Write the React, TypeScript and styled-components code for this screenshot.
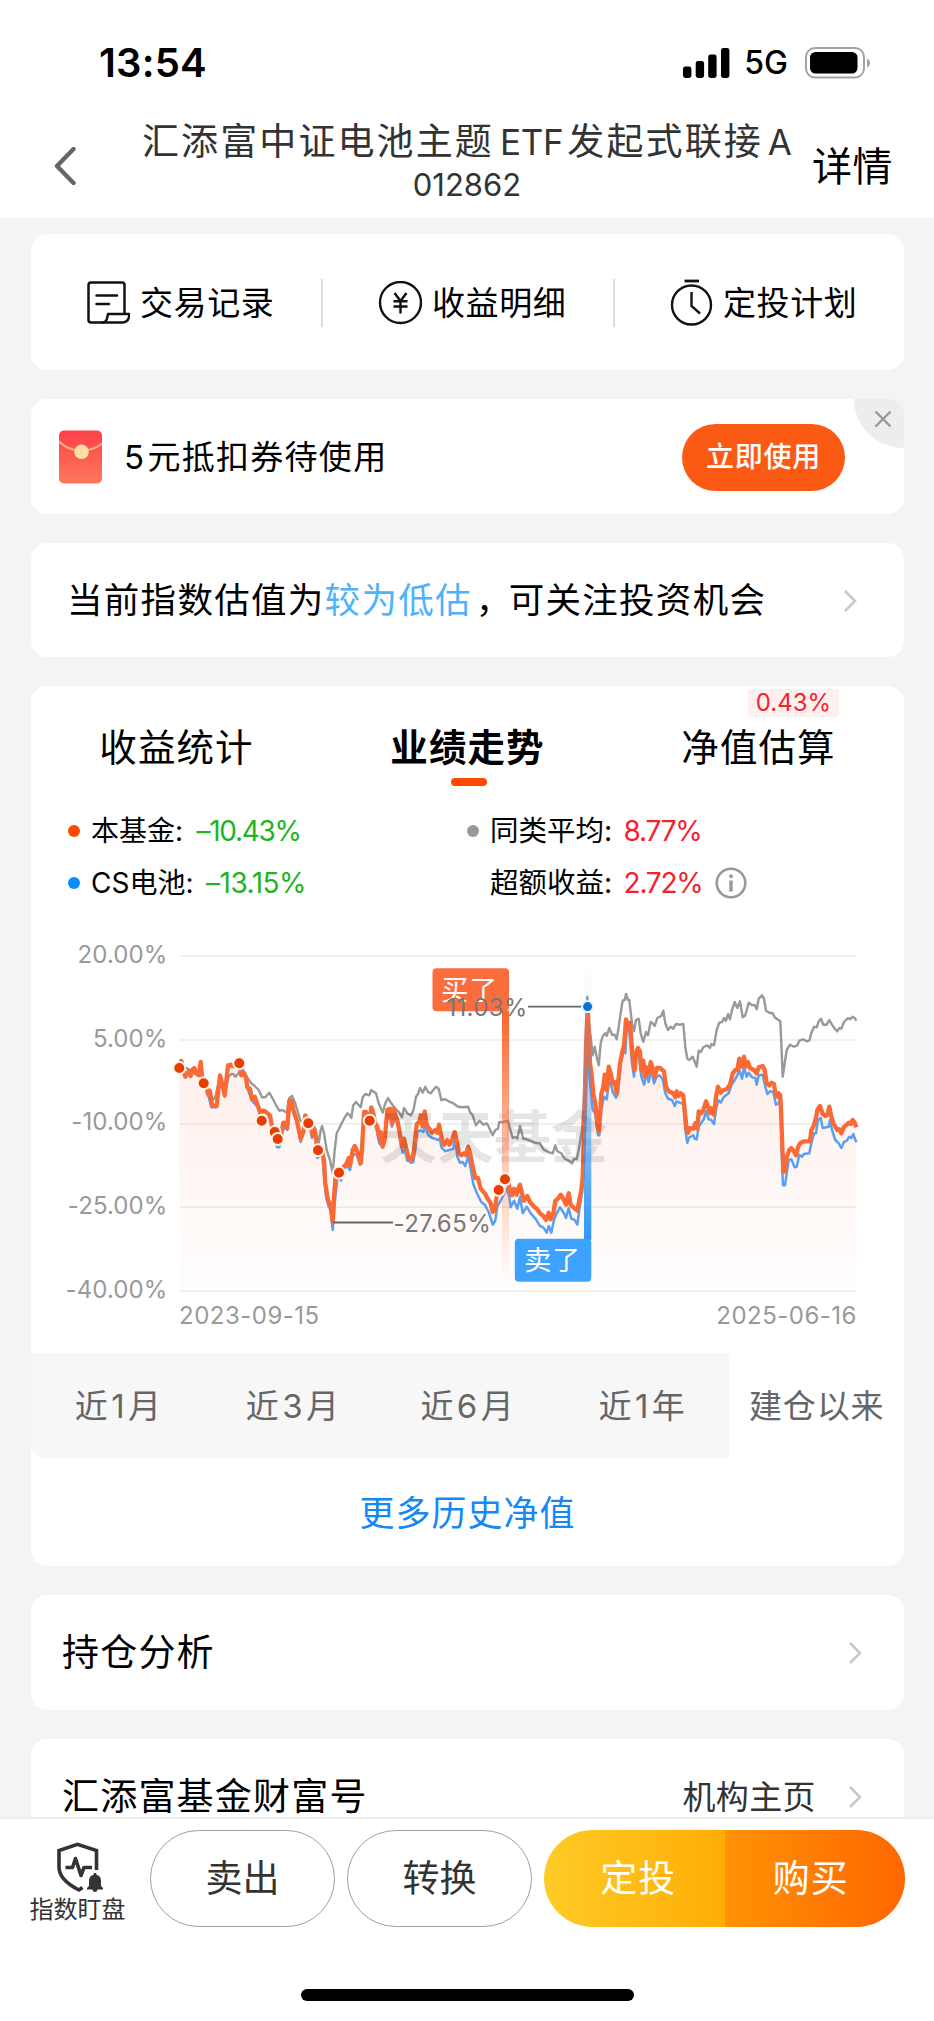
import React from "react";
import styled, { createGlobalStyle, css } from "styled-components";

const GlobalStyle = createGlobalStyle`
  *, *::before, *::after { box-sizing: border-box; }
  body {
    margin: 0;
    background: #f4f4f4;
    font-family: Inter, "Noto Sans CJK SC", sans-serif;
    color: #000;
  }
`;

const Screen = styled.div`
  width: 934px;
  height: 2021px;
  display: flex;
  flex-direction: column;
  overflow: hidden;
  background: #f4f4f4;
`;

const Label = styled.span<{ $size: number; $gap?: number; $color?: string; $weight?: number; $line?: number }>`
  font-size: ${(p) => p.$size}px;
  letter-spacing: ${(p) => p.$gap ?? 0}px;
  color: ${(p) => p.$color ?? "#000"};
  font-weight: ${(p) => p.$weight ?? 400};
  line-height: ${(p) => p.$line ?? 44}px;
  white-space: nowrap;
`;

/* Latin letters, digits and marks set inside Chinese text, with air on both sides. */
const Latin = styled.span<{ $before?: number; $after?: number }>`
  margin-left: ${(p) => p.$before ?? 0}px;
  margin-right: ${(p) => p.$after ?? 0}px;
`;

/* ---------- header ---------- */

const Header = styled.header`
  height: 218px;
  flex: none;
  background: #fff;
`;

const StatusBar = styled.div`
  height: 116px;
  padding: 10px 63px 0 99px;
  display: flex;
  align-items: center;
  justify-content: space-between;
`;

const StatusIcons = styled.div`
  display: flex;
  align-items: center;
  svg { display: block; }
`;

const NetworkLabel = styled(Label)`
  margin: 0 17px 0 13px;
`;

const NavBar = styled.div`
  display: grid;
  grid-template-columns: 140px 654px 140px;
  height: 102px;
`;

const NavBack = styled.div`
  padding: 31px 0 0 53px;
`;

const NavTitle = styled.div`
  display: flex;
  flex-direction: column;
  align-items: center;
  padding-top: 2px;
`;

const NavAction = styled.div`
  padding: 29px 0 0 18px;
`;

/* ---------- cards ---------- */

const Content = styled.main`
  flex: 1;
  min-height: 0;
  overflow: hidden;
  display: flex;
  flex-direction: column;
  gap: 29px;
  padding: 16px 30px 0 31px;
`;

const Card = styled.section<{ $height: number }>`
  position: relative;
  flex: none;
  height: ${(p) => p.$height}px;
  background: #fff;
  border-radius: 16px;
  overflow: hidden;
`;

const QuickActions = styled.div`
  display: grid;
  grid-template-columns: 290px 292px 1fr;
  align-items: center;
  height: 138px;
`;

const QuickAction = styled.div`
  height: 48px;
  display: flex;
  align-items: center;
  padding-left: 55px;
  & + & { border-left: 2px solid #dedede; }
  svg { flex: none; margin-right: 10px; }
`;

const Row = styled.div<{ $left: number; $right: number }>`
  height: 100%;
  display: flex;
  align-items: center;
  justify-content: space-between;
  padding: 1px ${(p) => p.$right}px 0 ${(p) => p.$left}px;
`;

const RowGroup = styled.div<{ $gap: number }>`
  display: flex;
  align-items: center;
  gap: ${(p) => p.$gap}px;
`;

const UseButton = styled.button`
  width: 163px;
  height: 67px;
  border: 0;
  border-radius: 34px;
  background: #fb5a14;
  padding: 0;
  display: flex;
  align-items: center;
  justify-content: center;
  font-family: inherit;
`;

const CloseCorner = styled.div`
  position: absolute;
  top: 0;
  right: 0;
  width: 50px;
  height: 49px;
  background: #ededed;
  border-bottom-left-radius: 50px 49px;
  svg { display: block; margin: 11px 0 0 20px; }
`;

/* ---------- performance ---------- */

const Tabs = styled.div`
  display: grid;
  grid-template-columns: repeat(3, 1fr);
  height: 119px;
`;

const Tab = styled.div`
  position: relative;
  display: flex;
  flex-direction: column;
  align-items: center;
  padding-top: 40px;
`;

const TabMark = styled.div`
  width: 36px;
  height: 8px;
  border-radius: 4px;
  background: #ff4800;
  margin: 8px 0 0 3px;
`;

const TabBadge = styled.div`
  position: absolute;
  top: 3px;
  left: 135px;
  width: 91px;
  height: 28px;
  border-radius: 4px;
  background: #fff0f0;
  display: flex;
  align-items: center;
  justify-content: center;
`;

const Legend = styled.div`
  display: grid;
  grid-template-columns: 399px 1fr;
  grid-auto-rows: 52px;
  padding-left: 37px;
  margin-bottom: 1px;
`;

const LegendItem = styled.div`
  display: flex;
  align-items: center;
  svg { margin-left: 12px; }
`;

const Dot = styled.i<{ $color: string }>`
  width: 12px;
  height: 12px;
  border-radius: 50%;
  background: ${(p) => p.$color};
  margin-right: 11px;
`;

const LegendName = styled(Label)<{ $width: number }>`
  width: ${(p) => p.$width}px;
`;

const ChartSvg = styled.svg`
  display: block;
  width: 873px;
  height: 430px;
  margin-bottom: 13px;
`;

const Ranges = styled.div`
  display: grid;
  grid-template-columns: repeat(5, 1fr);
  height: 105px;
  background: #f7f7f7;
  border-bottom-left-radius: 12px;
`;

const Range = styled.div<{ $active?: boolean }>`
  display: flex;
  align-items: center;
  justify-content: center;
  ${(p) => p.$active && css`background: #fff;`}
`;

const MoreLink = styled.div`
  height: 110px;
  display: flex;
  align-items: center;
  justify-content: center;
`;

/* ---------- bottom bar ---------- */

const BottomBar = styled.footer`
  flex: none;
  height: 204px;
  background: #fff;
  border-top: 2px solid #ededed;
  display: flex;
  flex-direction: column;
  justify-content: space-between;
  align-items: center;
  padding-bottom: 20px;
`;

const Actions = styled.div`
  width: 100%;
  display: flex;
  padding: 11px 29px 0 29px;
`;

const Watch = styled.div`
  width: 97px;
  display: flex;
  flex-direction: column;
  align-items: center;
  padding-top: 12px;
  margin-right: 24px;
  svg { display: block; margin-left: 4px; }
`;

const Pill = styled.button`
  width: 185px;
  height: 97px;
  border: 1.5px solid #a0a0a0;
  border-radius: 49px;
  background: #fff;
  margin-right: 12px;
  padding: 0;
  font-family: inherit;
`;

const BuyGroup = styled.div`
  display: flex;
  width: 361px;
  height: 97px;
  border-radius: 49px;
  overflow: hidden;
`;

const BuyHalf = styled.button<{ $from: string; $to: string; $side: "left" | "right" }>`
  flex: 1;
  border: 0;
  padding: 0;
  padding-${(p) => p.$side}: 8px;
  font-family: inherit;
  background: linear-gradient(90deg, ${(p) => p.$from}, ${(p) => p.$to});
`;

const HomeIndicator = styled.div`
  width: 333px;
  height: 12px;
  border-radius: 6px;
  background: #000;
`;

/* ---------- icons ---------- */

const Chevron = () => (
  <svg width="14" height="24" viewBox="0 0 14 24" fill="none" stroke="#c8c8c8" strokeWidth="2.6">
    <path d="M2 2 12 12 2 22" />
  </svg>
);

const SignalIcon = () => (
  <svg width="48" height="30" viewBox="0 0 48 30">
    <rect x="0" y="18.5" width="8.4" height="11.5" rx="2.4" />
    <rect x="12.7" y="13" width="8.4" height="17" rx="2.4" />
    <rect x="25.2" y="6.5" width="8.4" height="23.5" rx="2.4" />
    <rect x="38" y="0" width="8.4" height="30" rx="2.4" />
  </svg>
);

const BatteryIcon = () => (
  <svg width="66" height="32" viewBox="0 0 66 32">
    <rect x="1" y="1" width="58" height="29.5" rx="9" fill="none" stroke="#a3a3a3" strokeWidth="2" />
    <rect x="5" y="5" width="47.5" height="21.5" rx="5.5" />
    <path d="M62 11.5c4 1.5 4 7.500 0 9z" fill="#a3a3a3" />
  </svg>
);

const RecordIcon = () => (
  <svg width="44" height="44" viewBox="0 0 44 44" fill="none" stroke="#111" strokeWidth="2.5" strokeLinejoin="round">
    <path d="M18 41.500H5q-2.500 0-2.500-2.500V4q0-2.500 2.500-2.500h31q2.500 0 2.500 2.500v29" />
    <path d="M10.500 14.500h20.500M10.500 23h12.500" strokeLinecap="round" />
    <path d="M22 33h21.500q-.5 8.500-7 8.500H16.500q3.500 0 4.500-4z" />
  </svg>
);

const YenIcon = () => (
  <svg width="44" height="44" viewBox="0 0 44 44" fill="none" stroke="#111" strokeWidth="2.4">
    <circle cx="22.500" cy="21.500" r="20.500" />
    <path d="M16.500 12 22.500 20 28.500 12M22.500 20v12.500M15.500 20.300h14M15.500 25.500h14" />
  </svg>
);

const TimerIcon = () => (
  <svg width="43" height="48" viewBox="0 0 43 48" fill="none" stroke="#111" strokeWidth="2.4">
    <circle cx="21.500" cy="26" r="19.500" />
    <path d="M14.500 2h14.500" strokeWidth="2.800" />
    <path d="M21.500 13v14l8.500 7.500" />
  </svg>
);

const EnvelopeIcon = () => (
  <svg width="43" height="54" viewBox="0 0 43 54">
    <defs>
      <linearGradient id="env" x1="0" y1="0" x2="0" y2="1">
        <stop offset="0" stopColor="#fd4047" />
        <stop offset="1" stopColor="#ff785c" />
      </linearGradient>
    </defs>
    <rect y="0.500" width="43" height="53" rx="5" fill="url(#env)" />
    <path d="M0 11.500Q9 20.500 22 20.500T43 13.500" fill="none" stroke="#ffb07f" strokeWidth="2" />
    <circle cx="22.500" cy="21.800" r="7.300" fill="#fddfa4" />
  </svg>
);

const InfoIcon = () => (
  <svg width="32" height="32" viewBox="0 0 32 32" fill="none" stroke="#999" strokeWidth="2.600">
    <circle cx="16" cy="16" r="14.300" />
    <path d="M16 13.500v11" strokeWidth="3.400" />
    <circle cx="16" cy="9.300" r="2" fill="#999" stroke="none" />
  </svg>
);

const ShieldIcon = () => (
  <svg width="50" height="52" viewBox="0 0 50 52" fill="none" stroke="#333" strokeWidth="3.600">
    <path d="M41.500 28V8.500L22.500 2.300 4 8.500V25q0 13 20 23l3.500-2.500" />
    <path d="M10.500 25.500H17.500L20.500 16.500 26 33.500 29 25.500H37" strokeLinejoin="round" />
    <path
      d="M32 47.500v-1.600l2-2V39q0-5.300 4.700-6.200V31h2.600v1.800Q46 33.700 46 39v4.900l2 2v1.600h-5.300q-.7 2.500-2.700 2.500t-2.700-2.500z"
      fill="#333"
      stroke="none"
    />
  </svg>
);

/* ---------- chart ---------- */

type Segment = [number, string];

// Every segment holds its own horizontal offset; three units make one pixel.
const fund: Segment[] = [
  [0, "418,414 424,392 430,414 436,440 442,432 448,422 452,438 458,418 463,414 470,432 476,436 482,396 486,440 491,460 500,476 505,494 510,482 516,526 530,528 534,490 540,436 547,462 554,496 560,440 564,406 574,404 584,410 598,402 604,436 612,430 618,442 622,472 630,476 636,508 644,500 654,528 662,552 668,542 676,544 690,556 696,590 704,605 713,628 720,640 726,600 730,578 736,578 742,594 748,512 754,512 760,540 770,570 782,626 790,606 796,556 805,580 812,584 818,616 824,600 830,640 836,662 846,662 852,690 856,760 864,810 872,828 878,876"],
  [870, "12,800 16,745 27,728 36,715 44,708 50,700 56,684 60,706 68,660 74,648 82,664 92,700 96,660 102,546 108,546 119,572 124,532 130,550 136,580 142,590 148,626 152,606 158,650 164,630 172,540 180,536 186,580 192,536 196,556 202,570 208,600 216,650 222,626 230,660 236,686 246,688 252,660 260,582 268,576 272,556 278,590 284,544 290,584 298,596 306,608 316,600 322,608 327,584 334,620 342,644 352,630 358,644 366,630 374,606 382,640 386,670 394,676 402,670 408,676 414,650 420,668 428,710 436,744 444,744 452,776 464,790 472,804 482,820 488,846 494,840 500,800 506,780 514,768 525,748 534,756 540,780 546,796 552,776 560,794 566,772 570,764 576,790 582,812 592,798 600,816 612,830 620,836 630,850 640,858 648,870 656,848 662,868 670,850 676,812 684,806 692,794 700,806 708,824 716,790 722,824 730,832 742,842 748,810 754,780 758,740 761,640 764,520 768,350 773,232 776,300 780,400 784,425 790,490 796,520 802,580 806,605 810,560 814,492 820,470 824,434 830,480 836,410 842,430 848,460 854,456 860,490 866,440 870,400 876,370 882,346 888,268"],
  [1680, "84,290 90,278 94,330 98,380 104,420 108,370 114,354 120,364 124,420 130,392 134,440 140,412 146,430 152,396 158,416 164,440 170,414 180,414 192,424 198,470 206,484 220,490 226,502 230,484 236,498 242,490 250,496 254,540 260,600 264,608 270,594 280,596 286,580 292,596 296,544 304,550 310,540 318,514 324,530 330,550 334,534 342,554 348,500 354,470 362,488 370,480 380,478 390,464 398,430 406,420 412,420 418,386 424,410 432,380 438,410 444,396 450,414 462,420 470,430 476,412 488,408 494,420 500,460 508,466 514,458 522,462 526,490 532,500 536,490 541,496 544,560 547,650 551,726 556,720 560,680 568,660 574,654 582,664 588,676 594,652 600,640 610,634 630,634 634,600 640,590 648,564 652,540 660,528 668,552 676,558 682,554 688,530 694,560 702,584 712,600 718,598 724,610 732,590 740,584 746,578 752,582 758,570 764,578 769,592"],
];

const index: Segment[] = [
  [0, "418,414 436,438 458,420 476,436 482,400 491,462 505,496 514,532 528,532 540,438 554,500 564,410 598,406 618,444 622,474 636,512 654,532 665,572 690,560 704,618 711,652 718,652 726,606 736,590 742,600 750,516 770,574 782,636 796,566 810,590 816,624 824,606 832,684 846,670 858,800 866,830 872,840 878,900 884,820 892,748"],
  [870, "27,740 33,752 38,728 44,714 52,708 60,720 68,672 80,674 90,704 98,600 108,560 119,576 130,570 140,600 148,640 158,652 172,560 180,560 186,590 194,560 204,590 210,630 218,668 224,660 232,692 240,694 242,698 250,696 256,660 262,606 272,600 280,606 286,590 294,614 306,624 316,626 322,630 330,626 334,652 346,664 358,660 370,656 374,616 382,680 390,698 398,696 406,708 414,680 420,704 430,762 440,788 454,816 464,824 476,846 488,884 496,872 502,830 512,812 520,796 530,776 538,800 542,832 552,812 562,836 570,800 578,850 590,830 602,850 618,868 630,888 640,892 650,908 656,888 664,908 672,870 680,850 690,832 702,850 708,864 716,834 724,866 734,870 742,884 748,840 756,790 762,700 768,520 773,232 778,440 788,540 796,550 804,616 808,616 814,540 822,500 830,508 836,460 842,460 848,486 858,503 864,490 872,400 880,366 886,370 890,300"],
  [1680, "88,300 96,400 102,440 108,380 116,370 124,440 132,464 140,430 146,456 154,420 162,460 170,440 178,436 188,448 196,490 204,506 216,510 224,528 230,514 244,520 250,520 256,600 262,638 268,622 280,616 284,626 290,628 296,590 304,578 312,566 318,544 326,568 334,570 342,582 348,540 354,510 362,518 372,500 386,490 394,466 404,450 412,436 418,420 426,446 432,412 440,440 446,428 456,442 466,444 470,464 476,436 488,434 496,470 502,492 510,484 520,486 528,524 536,520 541,500 546,700 549,766 555,766 560,730 566,690 574,688 584,712 590,710 598,674 606,680 612,672 628,670 634,640 642,610 648,610 654,570 662,564 668,594 686,590 690,570 696,600 706,630 716,640 724,654 732,636 740,632 748,620 754,624 760,612 766,630 770,636"],
];

const average: Segment[] = [
  [0, "418,414 440,414 458,430 480,430 491,460 505,486 516,514 526,500 540,440 554,490 566,440 574,432 580,432 586,440 598,428 610,420 620,440 634,460 644,468 656,480 666,502 676,502 688,488 696,502 708,526 718,542 728,540 740,548 748,504 756,498 766,520 774,548 782,574 790,578 798,560 806,580 814,600 824,590 836,640 842,600 846,588 852,610 860,660 870,690 878,730"],
  [870, "14,660 20,610 30,590 42,566 52,550 58,554 64,564 70,526 78,516 92,532 98,502 106,492 118,496 124,480 132,486 138,490 146,520 158,548 166,520 174,504 184,520 194,534 208,548 216,562 222,534 232,550 242,556 250,542 258,500 264,492 270,474 278,488 286,470 294,486 302,490 310,480 318,470 326,476 334,510 346,508 356,514 370,520 384,530 400,532 414,530 420,546 428,556 438,586 448,572 460,584 470,580 476,590 488,616 496,600 504,596 508,576 520,576 534,572 540,596 548,624 556,620 562,626 570,588 580,626 590,628 606,634 614,638 624,640 630,640 640,658 654,666 668,670 676,646 682,664 694,670 704,686 720,694 726,700 732,686 740,688 746,660 756,600 762,500 768,350 772,200 776,280 782,320 788,376 794,350 800,380 806,406 812,340 818,318 826,310 830,318 838,294 846,314 854,314 860,328 866,290 872,248 878,212 884,210 888,192 894,210"],
  [1680, "88,210 96,280 102,304 108,270 116,266 122,310 130,336 138,306 144,316 152,276 158,280 164,288 172,264 184,258 190,242 196,280 204,300 212,290 220,296 228,282 240,284 250,282 256,350 262,386 268,390 278,380 290,410 296,362 302,366 310,352 322,346 330,354 334,342 342,346 350,300 358,278 366,276 372,264 378,272 384,252 390,268 396,240 404,216 412,234 420,214 428,262 436,256 446,218 454,224 464,226 470,238 476,206 486,196 492,206 498,242 508,248 518,250 524,262 532,268 541,274 544,340 548,440 554,400 560,360 570,344 582,350 592,346 598,332 610,328 620,334 628,332 634,310 642,290 650,292 656,274 663,266 670,284 680,284 688,270 696,284 704,296 712,304 718,294 724,296 732,276 744,264 750,268 758,260 764,264 769,272"],
];

const trades: [number, number][] = [
  [418, 414], [491, 460], [598, 400], [665, 572], [704, 606], [713, 627], [805, 580],
  [834, 661], [897, 728], [989, 572], [1376, 780], [1395, 748],
];

const px = (v: number) => (40 + v / 3).toFixed(1);
const py = (v: number) => (930 + v / 3).toFixed(1);

const toPoints = (segments: Segment[]) =>
  segments
    .flatMap(([dx, list]) =>
      list.split(" ").map((pair) => {
        const [x, y] = pair.split(",").map(Number);
        return `${px(x + dx)},${py(y)}`;
      })
    )
    .join(" ");

const yAxis: [string, number][] = [
  ["20.00%", 956.3],
  ["5.00%", 1040],
  ["-10.00%", 1123.7],
  ["-25.00%", 1207.3],
  ["-40.00%", 1291],
];

const Chart = () => {
  const fundPoints = toPoints(fund);
  return (
    <ChartSvg viewBox="31 910 873 430" fontFamily='Inter, "Noto Sans CJK SC", sans-serif'>
      <defs>
        <linearGradient id="area" gradientUnits="userSpaceOnUse" x1="0" y1="1000" x2="0" y2="1291">
          <stop offset="0" stopColor="#f4511e" stopOpacity="0.11" />
          <stop offset="1" stopColor="#f4511e" stopOpacity="0.01" />
        </linearGradient>
        <linearGradient id="buy" x1="0" y1="0" x2="0" y2="1">
          <stop offset="0" stopColor="#fc6329" />
          <stop offset="0.6" stopColor="#fc6329" stopOpacity="0.3" />
          <stop offset="1" stopColor="#fc6329" stopOpacity="0" />
        </linearGradient>
        <linearGradient id="sell" x1="0" y1="0" x2="0" y2="1">
          <stop offset="0" stopColor="#2f97f7" stopOpacity="0" />
          <stop offset="0.2" stopColor="#2f97f7" stopOpacity="0.08" />
          <stop offset="0.5" stopColor="#2f97f7" stopOpacity="0.35" />
          <stop offset="0.8" stopColor="#2f97f7" stopOpacity="0.8" />
          <stop offset="1" stopColor="#2f97f7" />
        </linearGradient>
      </defs>
      {yAxis.map(([label, y]) => (
        <g key={label}>
          <line x1="180" x2="856.500" y1={y} y2={y} stroke="#ececec" strokeWidth="1.500" />
          <text x="167.500" y={y + 6.700} textAnchor="end" fontSize="24" letterSpacing="0.1" fill="#999">{label}</text>
        </g>
      ))}
      <polygon points={`179.500,1291 ${fundPoints} 856.500,1291`} fill="url(#area)" />
      <polyline points={toPoints(average)} fill="none" stroke="#999" strokeWidth="2.400" strokeLinejoin="round" />
      <polyline points={toPoints(index)} fill="none" stroke="#5b9ff0" strokeWidth="2.500" strokeLinejoin="round" />
      <polyline points={fundPoints} fill="none" stroke="#fb6a35" strokeWidth="4.300" strokeLinejoin="round" />
      <text x="380" y="1158" fontSize="57" fontWeight="700" fill="#000" fillOpacity="0.1" textLength="228">天天基金</text>
      <rect x="502" y="1011" width="7" height="269" fill="url(#buy)" />
      <rect x="584" y="962" width="7.300" height="278" fill="url(#sell)" />
      {trades.map(([x, y]) => (
        <circle key={x} cx={px(x)} cy={py(y)} r="6" fill="#e83e00" stroke="#fff3ee" strokeWidth="2" />
      ))}
      <rect x="432.500" y="968.300" width="76.500" height="43" rx="4" fill="#fb6d3c" />
      <text x="441" y="999.500" fontSize="27.500" letterSpacing="1" fill="#fff">买了</text>
      <rect x="514.800" y="1238.800" width="76.500" height="43" rx="4" fill="#3da2fd" />
      <text x="524" y="1270" fontSize="27.500" letterSpacing="1" fill="#fff">卖了</text>
      <path d="M528 1006.600h59M333 1222.500h60" stroke="#666" strokeWidth="1.800" />
      <text x="446.500" y="1015.500" fontSize="24" letterSpacing="0.3" fill="#777">11.03%</text>
      <text x="393.500" y="1231.500" fontSize="24" letterSpacing="0.4" fill="#777">-27.65%</text>
      <circle cx="587.600" cy="1006.600" r="5.500" fill="#0b74d1" stroke="#e6f3ff" strokeWidth="2" />
      <text x="179" y="1324" fontSize="24" letterSpacing="0.5" fill="#999">2023-09-15</text>
      <text x="857" y="1324" textAnchor="end" fontSize="24" letterSpacing="0.5" fill="#999">2025-06-16</text>
    </ChartSvg>
  );
};

const ranges: [string, string, string][] = [
  ["近", "1", "月"],
  ["近", "3", "月"],
  ["近", "6", "月"],
  ["近", "1", "年"],
  ["建仓以来", "", ""],
];

export default function App() {
  return (
    <>
      <GlobalStyle />
      <Screen>
        <Header>
          <StatusBar>
            <Label $size={40} $gap={0.2} $weight={600}>13:54</Label>
            <StatusIcons>
              <SignalIcon />
              <NetworkLabel $size={32} $weight={500}>5G</NetworkLabel>
              <BatteryIcon />
            </StatusIcons>
          </StatusBar>
          <NavBar>
            <NavBack>
              <svg width="23" height="38" viewBox="0 0 23 38" fill="none" stroke="#666" strokeWidth="4.400">
                <path d="M20.500 2 4 19 20.500 36" strokeLinecap="round" strokeLinejoin="round" />
              </svg>
            </NavBack>
            <NavTitle>
              <Label $size={37} $gap={2.1} $color="#333" $line={48}>
                汇添富中证电池主题<Latin $before={6} $after={4}><Label $size={35} $gap={-0.3} $color="#333" $line={48}>ETF</Label></Latin>发起式联接<Latin $before={5}><Label $size={35} $color="#333" $line={48}>A</Label></Latin>
              </Label>
              <Label $size={31} $color="#333" $line={37}>012862</Label>
            </NavTitle>
            <NavAction>
              <Label $size={40} $gap={0.5}>详情</Label>
            </NavAction>
          </NavBar>
        </Header>

        <Content>
          <Card $height={136}>
            <QuickActions>
              <QuickAction><RecordIcon /><Label $size={33} $gap={0.6}>交易记录</Label></QuickAction>
              <QuickAction><YenIcon /><Label $size={33} $gap={0.6}>收益明细</Label></QuickAction>
              <QuickAction><TimerIcon /><Label $size={33} $gap={0.6}>定投计划</Label></QuickAction>
            </QuickActions>
          </Card>

          <Card $height={115}>
            <Row $left={28} $right={59}>
              <RowGroup $gap={22}>
                <EnvelopeIcon />
                <Label $size={33} $gap={1.3}><Latin $after={2}>5</Latin>元抵扣券待使用</Label>
              </RowGroup>
              <UseButton><Label $size={28} $gap={0.7} $color="#fff" $weight={500}>立即使用</Label></UseButton>
            </Row>
            <CloseCorner>
              <svg width="18" height="18" viewBox="0 0 18 18" stroke="#999" strokeWidth="2.400">
                <path d="M1.500 1.500 16.500 16.500M16.500 1.500 1.500 16.500" />
              </svg>
            </CloseCorner>
          </Card>

          <Card $height={114}>
            <Row $left={36} $right={47}>
              <Label $size={35.500} $gap={1.3}>
                当前指数估值为<Label $size={35.500} $gap={1.3} $color="#4db3fb">较为低估</Label><Latin $before={4} $after={-4}>，</Latin>可关注投资机会
              </Label>
              <Chevron />
            </Row>
          </Card>

          <Card $height={880}>
            <Tabs>
              <Tab><Label $size={37.500} $gap={1.1}>收益统计</Label></Tab>
              <Tab><Label $size={37.500} $gap={1.1} $weight={700}>业绩走势</Label><TabMark /></Tab>
              <Tab>
                <Label $size={37.500} $gap={1.1}>净值估算</Label>
                <TabBadge><Label $size={24} $color="#f5222d" $line={30}>0.43%</Label></TabBadge>
              </Tab>
            </Tabs>
            <Legend>
              <LegendItem>
                <Dot $color="#ff4800" />
                <LegendName $size={28} $width={105.5}>本基金:</LegendName>
                <Label $size={28} $gap={-1.3} $color="#1fb41f">–10.43%</Label>
              </LegendItem>
              <LegendItem>
                <Dot $color="#999" />
                <LegendName $size={28.500} $width={133.5}>同类平均:</LegendName>
                <Label $size={28} $gap={-1.2} $color="#f5222d">8.77%</Label>
              </LegendItem>
              <LegendItem>
                <Dot $color="#0a8cff" />
                <LegendName $size={28} $width={115}>CS电池:</LegendName>
                <Label $size={28} $gap={-0.5} $color="#1fb41f">–13.15%</Label>
              </LegendItem>
              <LegendItem>
                <Dot $color="transparent" />
                <LegendName $size={28.500} $width={133.5}>超额收益:</LegendName>
                <Label $size={28} $gap={-1.2} $color="#f5222d">2.72%</Label>
                <InfoIcon />
              </LegendItem>
            </Legend>
            <Chart />
            <Ranges>
              {ranges.map(([head, digit, tail]) => (
                <Range key={head + digit + tail} $active={!digit}>
                  <Label $size={33} $gap={0.9} $color="#666">
                    {head}
                    {digit && <Latin $before={2.5} $after={2.5}>{digit}</Latin>}
                    {tail}
                  </Label>
                </Range>
              ))}
            </Ranges>
            <MoreLink><Label $size={35} $gap={1} $color="#1488f5">更多历史净值</Label></MoreLink>
          </Card>

          <Card $height={115}>
            <Row $left={31} $right={42}>
              <Label $size={37} $gap={1.2}>持仓分析</Label>
              <Chevron />
            </Row>
          </Card>

          <Card $height={115}>
            <Row $left={31} $right={42}>
              <Label $size={37} $gap={1.2}>汇添富基金财富号</Label>
              <RowGroup $gap={32}>
                <Label $size={33} $gap={0.4} $color="#333">机构主页</Label>
                <Chevron />
              </RowGroup>
            </Row>
          </Card>
        </Content>

        <BottomBar>
          <Actions>
            <Watch>
              <ShieldIcon />
              <Label $size={24} $color="#333" $line={32}>指数盯盘</Label>
            </Watch>
            <Pill><Label $size={37} $color="#333">卖出</Label></Pill>
            <Pill><Label $size={37} $color="#333">转换</Label></Pill>
            <BuyGroup>
              <BuyHalf $side="left" $from="#fecb26" $to="#ffad05"><Label $size={37} $gap={1} $color="#fff">定投</Label></BuyHalf>
              <BuyHalf $side="right" $from="#ff9205" $to="#ff6700"><Label $size={37} $gap={1} $color="#fff">购买</Label></BuyHalf>
            </BuyGroup>
          </Actions>
          <HomeIndicator />
        </BottomBar>
      </Screen>
    </>
  );
}
